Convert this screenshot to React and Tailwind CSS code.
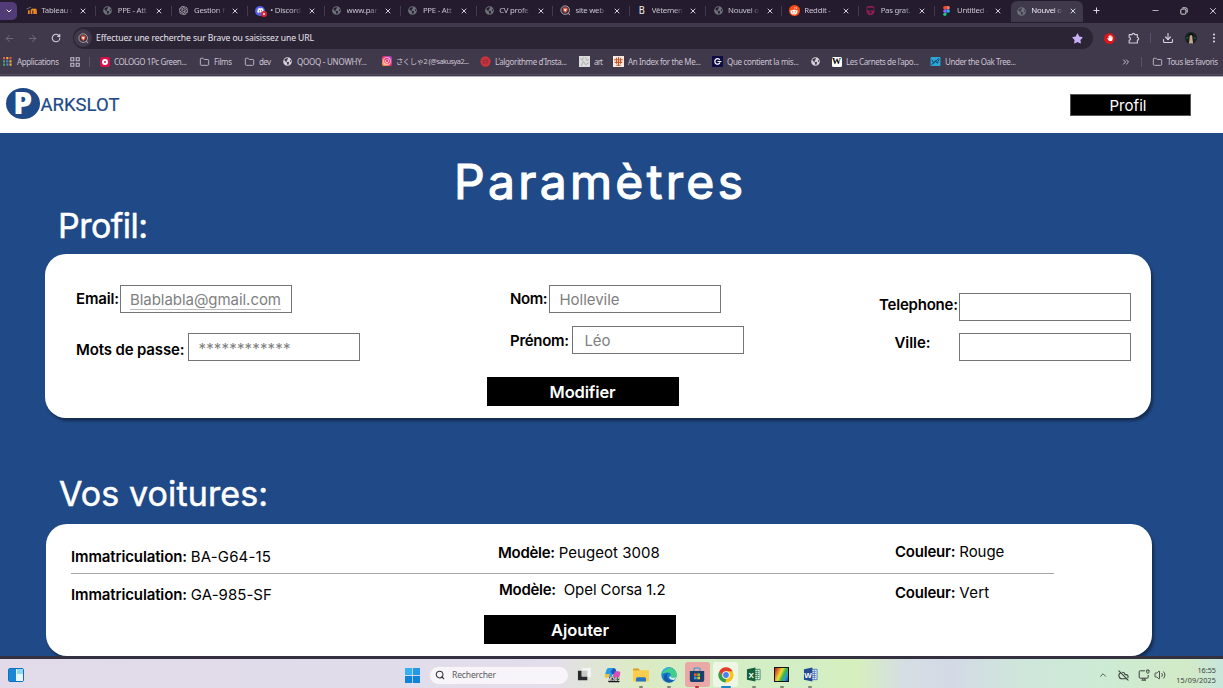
import { useLayoutEffect, useRef } from "react";
import { FaGlobeAmericas, FaDiscord, FaRedditAlien, FaInstagram, FaStar, FaHandPaper, FaTrain } from "react-icons/fa";
import { SiOpenai } from "react-icons/si";
import { ChevronDown, ChevronUp, X, ArrowLeft, ArrowRight, RotateCw, Plus, Minus, Download, EllipsisVertical, Folder, ChevronsRight, Search, CloudOff, Volume2 } from "lucide-react";

/* Spreads a label's letters over a given width. */
function Fit({ w, children, className = "" }) {
  const ref = useRef(null);
  useLayoutEffect(() => {
    const el = ref.current;
    el.style.letterSpacing = "0px";
    const natural = el.getBoundingClientRect().width;
    const n = el.textContent.length;
    el.style.letterSpacing = `${(w - natural) / Math.max(1, n - 1)}px`;
  }, [w, children]);
  return <span ref={ref} className={`inline-block whitespace-pre ${className}`}>{children}</span>;
}

const Globe = ({ light }) => (
  <FaGlobeAmericas className={light ? "size-[9px] text-[#d5d0da]" : "size-[9px] text-[#6d727a]"} />
);

const Lion = () => (
  <svg viewBox="0 0 12 12" className="size-[11px]">
    <circle cx="5.7" cy="5.6" r="4.7" fill="#3a3040" stroke="#b5a9ad" strokeWidth="1" />
    <path d="M3.2 3.4 4.5 2.7h2.5l1.3.7-.3 3.2L5.75 8.8 3.5 6.6Z" fill="#e0543b" />
    <path d="m4.4 4 1.3.7L7.1 4l-.4 2-1 1.2-.9-1.2Z" fill="#fff" />
    <path d="m9 9 1.8 1.8" stroke="#b5a9ad" strokeWidth="1.1" />
  </svg>
);

const Moodle = () => (
  <svg viewBox="0 0 12 10" className="h-[9px] w-[11px]" fill="none" stroke="#f18a1f" strokeWidth="1.9">
    <path d="M3 9V4.8M6 9V5.5Q6 3.8 7.5 3.8T9 5.5V9M9 5.5Q9 3.8 10 3.8T11 5.5V9" />
    <path d="m.5 3.3 5-2" stroke="#7a7480" strokeWidth="1" />
  </svg>
);

const DiscordIcon = () => (
  <span className="relative flex size-[10px] items-center justify-center rounded-full bg-[#5460e8] text-white">
    <FaDiscord className="size-[7px]" />
    <span className="absolute -right-0.5 -bottom-px flex size-[6px] items-center justify-center rounded-full bg-[#e0222d]">
      <span className="size-[2px] rounded-full bg-white" />
    </span>
  </span>
);

const Figma = () => (
  <svg viewBox="0 0 8 12" className="h-[10px] w-[7px]">
    <path d="M4 0H2a2 2 0 0 0 0 4h2Z" fill="#f24e1e" />
    <path d="M4 0h2a2 2 0 0 1 0 4H4Z" fill="#ff7262" />
    <path d="M4 4H2a2 2 0 0 0 0 4h2Z" fill="#a259ff" />
    <circle cx="6" cy="6" r="2" fill="#1abcfe" />
    <path d="M2 8h2v2a2 2 0 1 1-2-2Z" fill="#0acf83" />
  </svg>
);

const RedditIcon = () => (
  <span className="flex size-[11px] items-center justify-center rounded-full bg-[#ff4a14] text-white">
    <FaRedditAlien className="size-[8px]" />
  </span>
);

const tabs = [
  [<Moodle />, "Tableau d"],
  [<Globe />, "PPE - Att"],
  [<SiOpenai className="size-[9px] text-[#c9c4cf]" />, "Gestion f"],
  [<DiscordIcon />, "• Discord"],
  [<Globe />, "www.par"],
  [<Globe />, "PPE - Att"],
  [<Globe />, "CV profe"],
  [<Lion />, "site web"],
  [<span className="font-['DejaVu_Sans_Condensed','DejaVu_Sans'] text-[10px] leading-none text-[#eceae6]">B</span>, "Vêtemen"],
  [<Globe />, "Nouvel o"],
  [<RedditIcon />, "Reddit - "],
  [<FaTrain className="size-[9px] text-[#8d1d55]" />, "Pas grat."],
  [<Figma />, "Untitled -"],
  [<Globe />, "Nouvel o"],
];

function Tab({ icon, label, active, divider }) {
  return (
    <div className={`flex h-full shrink-0 items-center ${active ? "mt-px w-[71.6px] rounded-t-md bg-[#40384b]" : "w-[76.3px]"}`}>
      <span className={`flex w-[12px] justify-center ${active ? "ml-[4px]" : "ml-[6px]"}`}>{icon}</span>
      <span className={`ml-[4px] w-[32px] overflow-hidden text-[7.8px] tracking-[-0.25px] whitespace-nowrap [mask-image:linear-gradient(to_right,black_70%,transparent_100%)] ${active ? "text-[#eeeaf3]" : "text-[#c9c4d0]"}`}>
        {label}
      </span>
      <X className="ml-[5.5px] size-[8px] text-[#e0dce6]" strokeWidth={2.8} />
      {divider && <span className="ml-auto h-[10px] w-px bg-[#433b4e]" />}
    </div>
  );
}

const AppsGrid = () => (
  <svg viewBox="0 0 10 10" className="size-[9px]">
    {["#e2574c", "#e8b23b", "#e2574c", "#49a35a", "#4a86d8", "#e8b23b", "#49a35a", "#4a86d8", "#e8b23b"].map((c, i) => (
      <rect key={i} x={(i % 3) * 3.6} y={Math.floor(i / 3) * 3.6} width="2.3" height="2.5" fill={c} />
    ))}
  </svg>
);

const Squares = () => (
  <svg viewBox="0 0 10 10" className="size-[10px]" fill="none" stroke="#c3bccb" strokeWidth="1.1">
    <path d="M.8.8h3v3h-3ZM6.2.8h3v3h-3ZM.8 6.2h3v3h-3ZM6.2 6.2h3v3h-3Z" />
  </svg>
);

const FolderIcon = () => <Folder className="h-[10px] w-[11px] text-[#c3bccb]" strokeWidth={2.2} />;

const PuzzleIcon = () => (
  <svg viewBox="0 0 12 12" className="size-[12px]" fill="none" stroke="#cfc9d6" strokeWidth="1.2" strokeLinejoin="round">
    <path d="M1.2 2.6h2.9a1.3 1.3 0 0 1 2.6 0h2.7v2.9a1.3 1.3 0 0 1 0 2.6v2.9H1.2V8.2a1.3 1.3 0 0 0 0-2.7Z" />
  </svg>
);

const Cologo = () => (
  <span className="flex size-[10px] items-center justify-center rounded-[2px] bg-[#d6124c]">
    <span className="size-[6px] rounded-full border-2 border-white bg-[#d6124c]" />
  </span>
);
const Insta = () => (
  <span className="flex size-[10px] items-center justify-center rounded-[2px] bg-linear-to-tr from-[#fdb035] via-[#ee2a6a] to-[#9c34d0] text-white">
    <FaInstagram className="size-[8px]" />
  </span>
);
const RedBall = () => (
  <svg viewBox="0 0 10 10" className="size-[11px]">
    <circle cx="5" cy="5" r="4.7" fill="#c9343c" />
    <path d="M2.5 4h5M2.5 6.2h5M3.5 3v4M6.5 3v4" stroke="#9c2a3a" strokeWidth=".8" />
  </svg>
);
const Art = () => (
  <svg viewBox="0 0 10 10" className="size-[11px]">
    <rect width="10" height="10" fill="#dcdcdc" />
    <path d="m1 2 2 2 1-3M6 1l1 3 2-1M2 9l2-4 2 3 3-2" fill="none" stroke="#a8a8a8" strokeWidth=".8" />
  </svg>
);
const Index = () => (
  <svg viewBox="0 0 10 10" className="size-[11px]">
    <rect width="10" height="10" fill="#f5ebe2" />
    <path d="M5 1v8M3.2 1.6v5.4M6.8 1.6v5.4M1 3.4h8M1.6 5.8h6.8M3 8.4h4" fill="none" stroke="#c25a2c" strokeWidth="1" />
  </svg>
);
const Que = () => (
  <svg viewBox="0 0 10 10" className="size-[11px]">
    <rect width="10" height="10" fill="#0f0b45" />
    <path d="M7.1 3.5A2.5 2.5 0 1 0 7.3 6M5 5h3.6" fill="none" stroke="#fff" strokeWidth="1.1" />
  </svg>
);
const Wiki = () => (
  <span className="flex size-[10px] items-center justify-center rounded-[1.5px] bg-white font-['Liberation_Serif'] text-[9px] leading-none font-bold text-black">W</span>
);
const Oak = () => (
  <svg viewBox="0 0 11 10" className="h-[9px] w-[11px]">
    <rect width="11" height="10" rx="1" fill="#2ba7d6" />
    <path d="m1.5 3 2 4 2-3 2 3 2-4.5M1 8.5l8.5-7" fill="none" stroke="#104a70" strokeWidth="1.1" />
  </svg>
);

function Bookmark({ icon, label, w, box, size = "" }) {
  return (
    <div className={`flex shrink-0 items-center ${box}`}>
      <span className="flex w-[11px] shrink-0 justify-center">{icon}</span>
      {label && <Fit w={w} className={`ml-[4px] ${size}`}>{label}</Fit>}
    </div>
  );
}

function Chrome() {
  return (
    <div className="flex h-[76px] flex-col bg-[#40384b] font-['Noto_Sans','Noto_Sans_CJK_JP',sans-serif]">
      <div className="flex h-[23px] shrink-0 items-center overflow-hidden bg-[#241c2e] pb-[2px]">
        <div className="mr-[2.4px] flex h-[18px] w-[17px] items-center justify-center rounded-r-[5px] bg-[#513c78]">
          <ChevronDown className="size-[8px] text-white" strokeWidth={3} />
        </div>
        {tabs.map(([icon, label], i) => (
          <Tab key={i} icon={icon} label={label} active={i === 13} divider={i < 12} />
        ))}
        <Plus className="ml-[9px] size-[9px] text-[#e0dce6]" strokeWidth={2.6} />
        <div className="mr-[5px] ml-auto flex items-center gap-[20px] text-[#e0dce6]">
          <Minus className="size-[9px]" strokeWidth={2} />
          <svg viewBox="0 0 10 10" className="size-[8px]" fill="none" stroke="currentColor" strokeWidth="1.2">
            <rect x="1" y="2.6" width="6.4" height="6.4" rx="1.4" />
            <path d="M3 1h4.2A1.9 1.9 0 0 1 9 2.9V7" />
          </svg>
          <X className="size-[10px]" strokeWidth={2.2} />
        </div>
      </div>
      <div className="mt-[4px] flex h-[22px] shrink-0 items-center">
        <ArrowLeft className="ml-[4px] size-[11px] text-[#756d7e]" />
        <ArrowRight className="ml-[12px] size-[11px] text-[#756d7e]" />
        <RotateCw className="ml-[13px] size-[10px] text-[#d5d0da]" strokeWidth={2.6} />
        <div className="ml-[12px] flex h-[22px] w-[1020px] items-center rounded-full bg-[#2b2434]">
          <span className="ml-[1px] flex size-[18px] items-center justify-center rounded-full bg-[#40384b]"><Lion /></span>
          <Fit w={218} className="ml-[4px] text-[8.6px] text-[#e8e4ee]">Effectuez une recherche sur Brave ou saisissez une URL</Fit>
          <FaStar className="mr-[10px] ml-auto size-[11px] text-[#c9b0f5]" />
        </div>
        <span className="ml-[11px] flex size-[11px] items-center justify-center rounded-full bg-[#d8161c] text-white"><FaHandPaper className="size-[6px]" /></span>
        <span className="ml-[13px]"><PuzzleIcon /></span>
        <span className="ml-[10px] h-[10px] w-px bg-[#5b5267]" />
        <Download className="ml-[11px] size-[12px] text-[#d8d3de]" strokeWidth={2.2} />
        <svg viewBox="0 0 12 12" className="ml-[11px] size-[12px]">
          <circle cx="6" cy="6" r="6" fill="#17211f" />
          <path d="M4.6 3.4q1.4-1.8 2.8 0v3l.7 5H4l.6-5Z" fill="#c9a98e" />
          <path d="M4 5V2.5q2-2 4 0V5L7 3.3H5Z" fill="#0b0d0c" />
          <path d="M1.5 6h1.5M9 6h1.6" stroke="#2c8060" strokeWidth="1" />
        </svg>
        <EllipsisVertical className="ml-[11px] size-[12px] text-[#d8d3de]" strokeWidth={2.4} />
      </div>
      <div className="flex h-[25px] shrink-0 items-center pl-[2px] text-[8px] text-[#cbc5d2]">
        <Bookmark icon={<AppsGrid />} label="Applications" w={42} box="w-[67px]" />
        <Bookmark icon={<Squares />} box="w-[20px]" />
        <span className="mr-[9px] h-[10px] w-px bg-[#5b5267]" />
        <Bookmark icon={<Cologo />} label="COLOGO 1Pc Green..." w={73} box="w-[100px]" />
        <Bookmark icon={<FolderIcon />} label="Films" w={18} box="w-[45px]" />
        <Bookmark icon={<FolderIcon />} label="dev" w={12} box="w-[38px]" />
        <Bookmark icon={<Globe light />} label="QOOQ - UNOWHY..." w={70} box="w-[99px]" />
        <Bookmark icon={<Insta />} label="さくしゃ2 (@sakusya2..." w={73} box="w-[99px]" size="text-[7.4px]" />
        <Bookmark icon={<RedBall />} label="L'algorithme d'Insta..." w={72} box="w-[99px]" />
        <Bookmark icon={<Art />} label="art" w={9} box="w-[34px]" />
        <Bookmark icon={<Index />} label="An Index for the Me..." w={73} box="w-[99px]" />
        <Bookmark icon={<Que />} label="Que contient la mis..." w={72} box="w-[98px]" />
        <Bookmark icon={<Globe light />} box="w-[21px]" />
        <Bookmark icon={<Wiki />} label="Les Carnets de l'apo..." w={73} box="w-[99px]" />
        <Bookmark icon={<Oak />} label="Under the Oak Tree..." w={71} box="w-[100px]" />
        <ChevronsRight className="ml-auto size-[10px] text-[#d5d0da]" strokeWidth={2.2} />
        <span className="mr-[10px] ml-[10px] h-[10px] w-px bg-[#5b5267]" />
        <Bookmark icon={<FolderIcon />} label="Tous les favoris" w={51} box="w-[71px]" />
      </div>
      <div className="mt-auto h-[2px] border-t border-[#544b60] bg-[#40384b]" />
    </div>
  );
}

function Field({ label, w, labelBox, lift, children, className = "" }) {
  return (
    <div className={`flex items-start ${className}`}>
      <div className={`${labelBox} ${lift} shrink-0 leading-[18px] font-semibold`}><Fit w={w}>{label}</Fit></div>
      <div className="h-[28px] w-[172px] shrink-0 border border-[#747474] bg-white leading-[27px] text-[#808080]">{children}</div>
    </div>
  );
}

const Action = ({ children, w, className }) => (
  <button className={`flex h-[28.5px] w-[192px] items-center justify-center bg-black pt-[1px] text-[16.5px] font-semibold text-white ${className}`}>
    <Fit w={w}>{children}</Fit>
  </button>
);

function Pair({ k, kw, v, vw, gap = "ml-[4px]", className }) {
  return (
    <div className={`flex leading-[18px] ${className}`}>
      <Fit w={kw} className="font-semibold">{k}</Fit>
      <Fit w={vw} className={gap}>{v}</Fit>
    </div>
  );
}

function Site() {
  return (
    <div className="flex h-[580px] flex-col overflow-hidden bg-[#204a87] font-['Inter',sans-serif] text-[15px] text-black">
      <header className="flex h-[57.4px] shrink-0 border-t border-[#b9b5c0] bg-white">
        <div className="mt-[11px] ml-[6px] flex h-[31px] w-[33.5px] items-center justify-center rounded-[50%] bg-[#204a87] pb-[2px] font-['Open_Sans'] text-[30px] leading-none font-extrabold text-white">P</div>
        <div className="mt-[17px] ml-[1px] font-['Roboto'] text-[18.5px] leading-[23px] text-[#204a87] [-webkit-text-stroke:0.2px_#204a87]"><Fit w={79}>ARKSLOT</Fit></div>
        <button className="mt-[17px] mr-[32px] ml-auto flex h-[22px] w-[121px] items-center justify-center border border-[#555] bg-black pt-[2px] pr-[5px] text-[15px] text-white"><Fit w={37}>Profil</Fit></button>
      </header>
      <main className="flex flex-col text-white">
        <h1 className="mt-[19.6px] ml-[454px] h-[58px] text-[48px] leading-[58px] [-webkit-text-stroke:1.2px_white]"><Fit w={289}>Paramètres</Fit></h1>
        <h2 className="-mt-[7px] ml-[58px] h-[44px] text-[34px] leading-[44px] [-webkit-text-stroke:0.5px_white]"><Fit w={90}>Profil:</Fit></h2>
        <section className="mt-[6px] ml-[44.5px] flex h-[164.5px] w-[1106.5px] flex-col rounded-[21px] bg-white text-black shadow-[2px_3px_3px_rgba(0,0,0,0.4)]">
          <div className="flex h-[123.5px]">
            <div className="w-[434px] pl-[31.5px]">
              <Field className="mt-[30.6px]" label="Email:" w={43} labelBox="w-[43.5px]" lift="mt-[5px]">
                <Fit w={151} className="ml-[9.5px] border-b border-[#b9b9b9] leading-[19px]">Blablabla@gmail.com</Fit>
              </Field>
              <Field className="mt-[20px]" label="Mots de passe:" w={108.5} labelBox="w-[111.5px]" lift="mt-[8px]">
                <Fit w={92} className="ml-[10px] pt-px">************</Fit>
              </Field>
            </div>
            <div className="w-[369px] pl-[31.5px]">
              <Field className="mt-[30.6px]" label="Nom:" w={37.5} labelBox="w-[38.5px]" lift="mt-[5px]">
                <Fit w={60} className="ml-[10px]">Hollevile</Fit>
              </Field>
              <Field className="mt-[13px]" label="Prénom:" w={59} labelBox="w-[61.5px]" lift="mt-[6px]">
                <Fit w={26} className="ml-[12px] leading-[25px]">Léo</Fit>
              </Field>
            </div>
            <div className="pl-[31.5px]">
              <Field className="mt-[38.6px]" label="Telephone:" w={79} labelBox="w-[79.5px]" lift="mt-[3px]" />
              <Field className="mt-[12px]" label="Ville:" w={36} labelBox="w-[79.5px] pl-[15.5px]" lift="mt-[1px]" />
            </div>
          </div>
          <Action w={66} className="ml-[442px]">Modifier</Action>
        </section>
        <h2 className="mt-[54px] ml-[59px] h-[44px] text-[34px] leading-[44px] [-webkit-text-stroke:0.5px_white]"><Fit w={209}>Vos voitures:</Fit></h2>
        <section className="mt-[7.5px] ml-[46px] h-[132px] w-[1106px] shrink-0 rounded-[21px] bg-white text-black shadow-[2px_3px_3px_rgba(0,0,0,0.4)]">
          <div className="ml-[25px] flex h-[50.5px] w-[983px] border-b border-[#a9a5a9]">
            <Pair className="mt-[24px] w-[427px]" k="Immatriculation:" kw={116} v="BA-G64-15" vw={80} />
            <Pair className="mt-[20px] w-[397px]" k="Modèle:" kw={57} v="Peugeot 3008" vw={101} />
            <Pair className="mt-[19px]" k="Couleur:" kw={60.5} v="Rouge" vw={45} />
          </div>
          <div className="ml-[25px] flex h-[41px]">
            <Pair className="mt-[12px] w-[428px]" k="Immatriculation:" kw={116} v="GA-985-SF" vw={81} />
            <Pair className="mt-[7px] w-[396px]" k="Modèle:" kw={57} v="Opel Corsa 1.2" vw={102} gap="ml-[8px]" />
            <Pair className="mt-[10px]" k="Couleur:" kw={60.5} v="Vert" vw={30} />
          </div>
          <Action w={58} className="ml-[438px]">Ajouter</Action>
        </section>
      </main>
    </div>
  );
}

const TaskView = () => (
  <svg viewBox="0 0 16 16" className="size-[15px]">
    <path d="M5 1h10v10H5Z" fill="#f4f4f4" />
    <path d="M1 4h4v6h6v4H1Z" fill="#2a2a2c" /><path d="M5 4h6v6H5Z" fill="#c6c9c6" />
  </svg>
);
const Copilot = () => (
  <svg viewBox="0 0 18 17" className="h-[16px] w-[17px]">
    <path d="M5 1h6L8 11H3Q0 11 1.4 7L3 2.5Q3.6 1 5 1Z" fill="#2a9be2" />
    <path d="M10 1q2 0 2.6 2L14 8H9L7 5Z" fill="#1b55c4" />
    <path d="M12 4.5h3q3 0 2 3.4l-1 4.1H8Z" fill="#d54fb4" />
    <path d="M1.2 7.5h5L5 12H3Q0 11.5 1.2 7.5Z" fill="#e9c33a" />
    <rect x="4.5" y="10.5" width="12" height="5.8" rx=".8" fill="#17171a" />
    <text x="10.5" y="15.3" textAnchor="middle" fontSize="4.8" fontWeight="700" fill="#fff" fontFamily="Inter">M365</text>
  </svg>
);
const Explorer = () => (
  <svg viewBox="0 0 16 16" className="size-[16px]">
    <path d="M0 2.5Q0 1.5 1 1.5h4.5L7.5 4H0Z" fill="#d99a20" />
    <rect y="3.2" width="16" height="11.3" rx="1" fill="#fccc4c" />
    <path d="M3 14.5v-2.7q0-1.5 1.5-1.5h7q1.5 0 1.5 1.5v2.7Z" fill="#2474c4" />
  </svg>
);
const Edge = () => (
  <svg viewBox="0 0 16 16" className="size-[16px]">
    <circle cx="8" cy="8" r="7.7" fill="#1681d0" />
    <path d="M.4 7A7.7 7.7 0 0 1 15.7 7.8Q15.6 10.6 12 10.6q-3 0-2.2-1.8Q10 5.6 6.7 5.5 3 5.4.4 7Z" fill="#42cf8c" />
    <path d="M.4 7A7.7 7.7 0 0 1 10 .6Q5 2 .4 7Z" fill="#2bb4d8" />
    <path d="M6.1 7.8Q5.2 14 12.8 13q-2 2.7-5.4 2.6Q2.3 14 3 9.5 3.7 6 7.8 6q-1.4.6-1.7 1.8Z" fill="#155aa5" />
    <path d="M9.7 8.8q-.8 1.8 2.3 1.9 2 0 3.3-1-.8 2.4-2.5 3.3Q8.7 13.1 8 10Z" fill="#d9eee0" />
  </svg>
);
const Store = () => (
  <svg viewBox="0 0 16 16" className="size-[16px]">
    <path d="M5 4V2q0-1 1-1h4q1 0 1 1v2" fill="none" stroke="#2aa5df" strokeWidth="1.2" />
    <path d="M.8 4h14.4v9q0 2-2 2H2.8q-2 0-2-2Z" fill="#173f70" />
    <path d="M5 6.3h2.7V9H5Z" fill="#f1512d" /><path d="M8.3 6.3H11V9H8.3Z" fill="#7fbc37" />
    <path d="M5 9.6h2.7v2.7H5Z" fill="#29a7e8" /><path d="M8.3 9.6H11v2.7H8.3Z" fill="#fbbb22" />
  </svg>
);
const ChromeIcon = () => (
  <svg viewBox="0 0 16 16" className="size-[16px]">
    <circle cx="8" cy="8" r="7.6" fill="#fbc116" />
    <path d="M1.4 4.2A7.6 7.6 0 0 1 14.6 4.2H8L4.7 10Z" fill="#e33b2e" />
    <path d="M1.4 4.2 4.7 9.9Q6 12 8.3 11.8l-1 3.8A7.6 7.6 0 0 1 1.4 4.2Z" fill="#2da14f" />
    <circle cx="8" cy="8" r="3.8" fill="#fff" /><circle cx="8" cy="8" r="2.9" fill="#4384f0" />
  </svg>
);
const Office = ({ letter, dark, mid }) => (
  <svg viewBox="0 0 16 16" className="size-[15px]">
    <path d="M8 2.5h7v11H8Z" fill="#f2f7f3" stroke={mid} strokeWidth=".9" />
    <path d="M9.5 5H14M9.5 7H14M9.5 9H14M9.5 11H14M12 3v10" stroke={mid} strokeWidth=".8" />
    <path d="m1 2.5 9-2v15l-9-2Z" fill={dark} />
    <text x="5.4" y="11.3" textAnchor="middle" fontSize="8.5" fontWeight="700" fill="#fff" fontFamily="Liberation Sans">{letter}</text>
  </svg>
);
const Rainbow = () => (
  <span className="flex size-[15px] items-center justify-center bg-[#151515]">
    <span className="size-[13px] bg-[linear-gradient(115deg,#c22c2c_5%,#ee9a20_28%,#e8e23a_42%,#3cb44a_62%,#26a0c8_80%,#3a3ab0_100%)]" />
  </span>
);
const Monitor = () => (
  <svg viewBox="0 0 12 12" className="size-[12px]" fill="none" stroke="currentColor" strokeWidth="1">
    <path d="M7 1.8H2.2a1 1 0 0 0-1 1v5.4a1 1 0 0 0 1 1h7a1 1 0 0 0 1-1V6M3.5 11.2h4.5M4.8 9.3v1.8M6.8 9.3v1.8" />
    <path d="M8.7 1h2.3v2.2L9.85 4.6 8.7 3.2Z" />
  </svg>
);

const Slot = ({ children, dot, tile = "" }) => (
  <div className="flex h-full w-[28.2px] flex-col items-center">
    <div className={`mt-[2px] flex h-[25px] w-[25px] items-center justify-center rounded-[3px] ${tile}`}>{children}</div>
    {dot && <span className={`-mt-[1px] h-[2px] rounded-full ${dot}`} />}
  </div>
);

function Taskbar() {
  return (
    <div className="flex h-[29px] items-center bg-[linear-gradient(90deg,#e2dae9_0%,#e0dcea_28%,#e3deeb_45%,#dcebc4_52%,#d4edc4_58%,#d3eec5_66%,#d6efbd_70%,#d5dde4_74%,#d3dae6_78%,#cfe5db_83%,#cdebd5_90%,#d2eac6_97%,#c8e6dc_100%)] font-['Noto_Sans',sans-serif]">
      <span className="mt-[3px] ml-[8px] flex h-[14px] w-[16px] rounded-[2px] border border-[#0f6fb8] bg-[#eaf6ff]">
        <span className="h-full w-[7px] bg-[#1b87d6]" />
        <span className="ml-px h-[12px] w-[6px] bg-[linear-gradient(#8fd8f6_45%,#eaf6ff_45%)]" />
      </span>
      <svg viewBox="0 0 15 15" className="mt-[3px] ml-[381px] size-[15px] text-[#0f83da]" fill="currentColor">
        <path d="M0 0h7.1v7.1H0Z" fill="#35b2ee" /><path d="M7.9 0H15v7.1H7.9Z" fill="#2599e3" />
        <path d="M0 7.9h7.1V15H0ZM7.9 7.9H15V15H7.9Z" />
      </svg>
      <div className="mt-[3px] ml-[9px] flex h-[19px] w-[140px] items-center rounded-full border border-[#e5e0e8] bg-[#f7f5fa] text-[8.6px] text-[#5c5a60]">
        <Search className="ml-[5px] size-[10px] text-[#36363a]" strokeWidth={2.6} />
        <Fit w={44} className="ml-[7px]">Rechercher</Fit>
      </div>
      <div className="ml-[1.5px] flex h-[29px] pt-[1px]">
        <Slot><TaskView /></Slot>
        <Slot><Copilot /></Slot>
        <Slot dot="w-[4px] bg-[#7c8774]"><Explorer /></Slot>
        <Slot dot="w-[4px] bg-[#7c8774]"><Edge /></Slot>
        <Slot dot="w-[4px] bg-[#c03030]" tile="bg-[#eaa8a6]"><Store /></Slot>
        <Slot dot="w-[10px] bg-[#1f86c9]" tile="bg-[#eef7e6]"><ChromeIcon /></Slot>
        <Slot dot="w-[4px] bg-[#7c8774]"><Office letter="X" dark="#17613a" mid="#2f8056" /></Slot>
        <Slot dot="w-[4px] bg-[#7c8774]"><Rainbow /></Slot>
        <Slot dot="w-[4px] bg-[#7c8774]"><Office letter="W" dark="#234b94" mid="#3d6cbc" /></Slot>
      </div>
      <div className="mt-[3px] mr-[7px] ml-auto flex items-center text-[#3a413c]">
        <ChevronUp className="size-[10px]" strokeWidth={2} />
        <CloudOff className="ml-[10px] size-[11px]" strokeWidth={2.4} />
        <span className="ml-[9px]"><Monitor /></span>
        <Volume2 className="ml-[4px] size-[12px]" strokeWidth={1.8} />
        <div className="ml-[10px] flex w-[40px] flex-col items-end text-[7.2px] leading-[10px]">
          <Fit w={18.5}>16:55</Fit>
          <Fit w={39.5}>15/09/2025</Fit>
        </div>
      </div>
    </div>
  );
}

export default function App() {
  return (
    <div className="flex h-[688px] w-[1223px] flex-col overflow-hidden">
      <Chrome />
      <Site />
      <div className="h-[3px] shrink-0 bg-[#35303f]" />
      <Taskbar />
    </div>
  );
}
